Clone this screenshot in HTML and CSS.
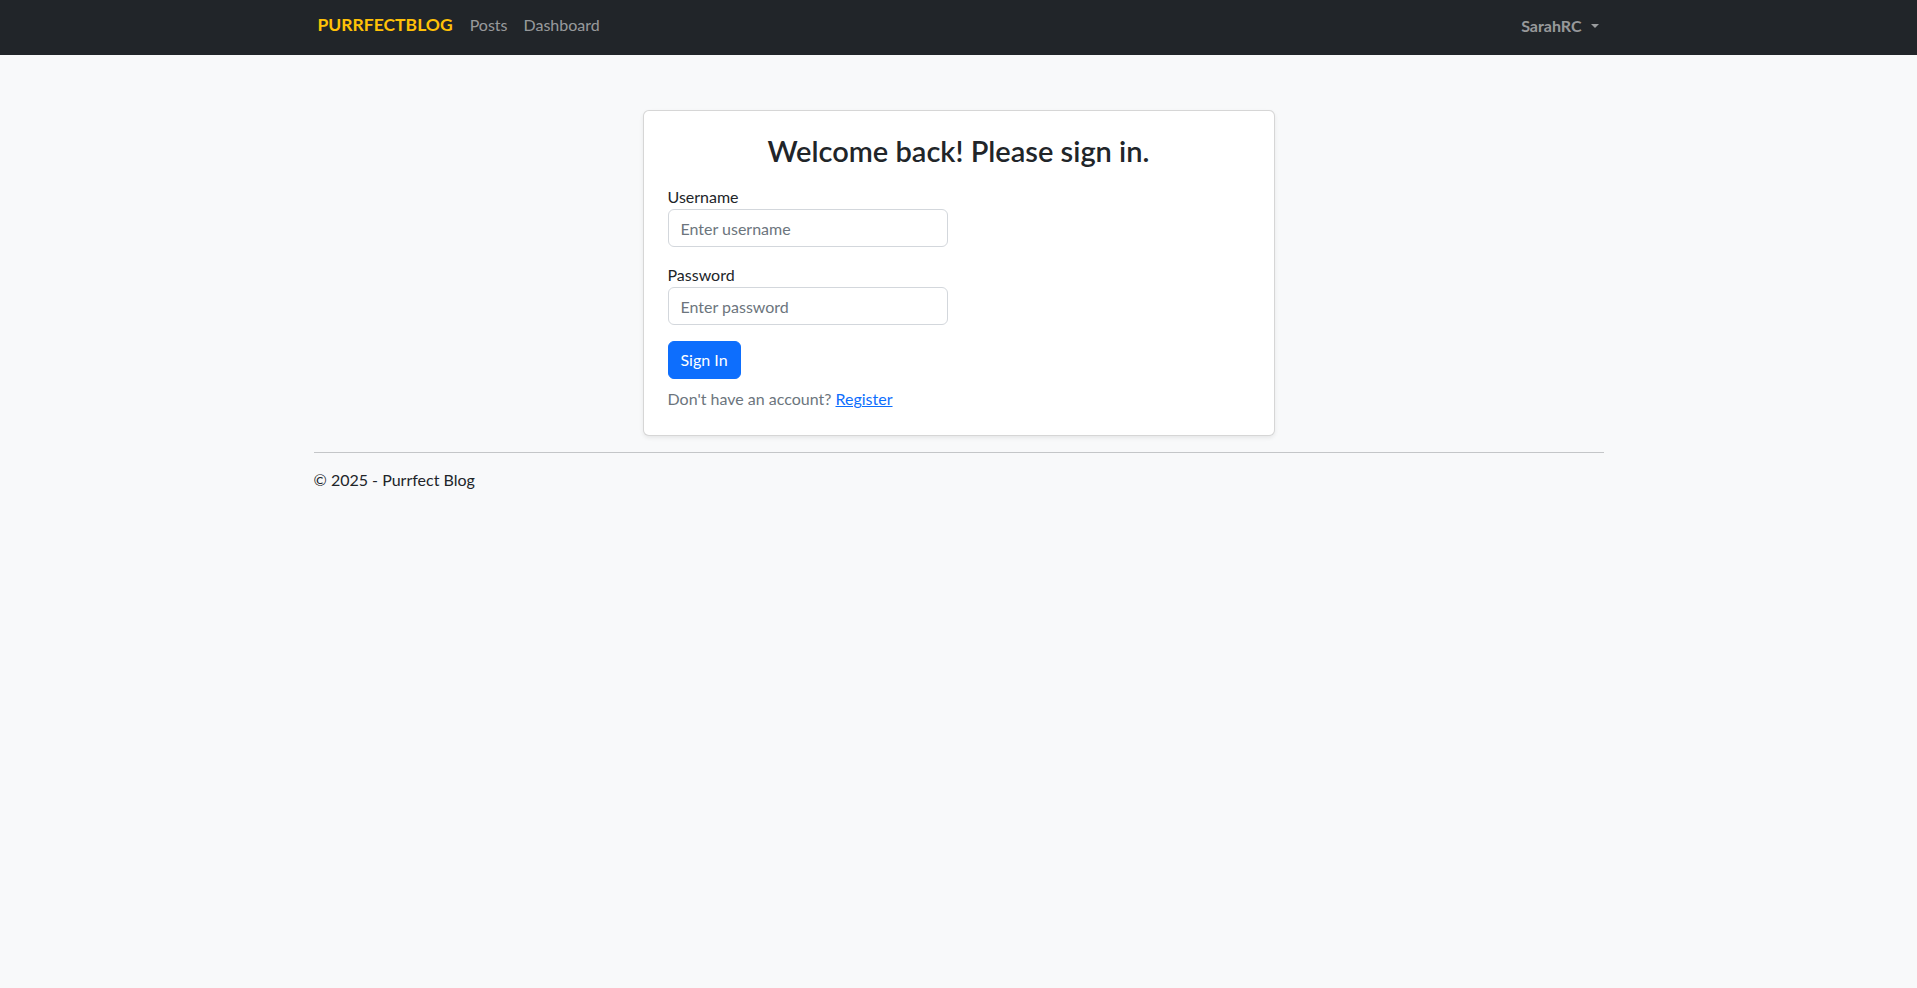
FILE: index.html
```
<!DOCTYPE html>
<html lang="en">
<head>
<meta charset="utf-8">
<title>Sign in - Purrfect Blog</title>
<link rel="stylesheet" href="styles.css">
</head>
<body>
<nav class="navbar">
  <div class="nav-inner">
    <div class="nav-left">
      <a class="brand" href="#">PURRFECTBLOG</a>
      <a class="nav-link" href="#">Posts</a>
      <a class="nav-link" href="#">Dashboard</a>
    </div>
    <a class="user-toggle" href="#">SarahRC<span class="caret"></span></a>
  </div>
</nav>
<main class="page">
  <div class="card">
    <h3 class="card-title">Welcome back! Please sign in.</h3>
    <form class="form">
      <div class="field">
        <label class="form-label" for="username">Username</label>
        <input class="form-control" id="username" type="text" placeholder="Enter username">
      </div>
      <div class="field">
        <label class="form-label" for="password">Password</label>
        <input class="form-control" id="password" type="password" placeholder="Enter password">
      </div>
      <button class="btn-primary" type="button">Sign In</button>
    </form>
    <p class="register">Don't have an account? <a href="#">Register</a></p>
  </div>
  <footer class="footer">
    <hr class="divider">
    <p class="copyright">© 2025 - Purrfect Blog</p>
  </footer>
</main>
</body>
</html>
```
FILE: styles.css
```
* { box-sizing: border-box; }
html, body { margin: 0; padding: 0; }
body {
  background: #f8f9fa;
  color: #212529;
  font-family: "Lato", "Open Sans", sans-serif;
  font-size: 16px;
  line-height: 24px;
}
.navbar {
  background: #212529;
  height: 55px;
}
.nav-inner {
  width: 1290px;
  margin: 0 auto;
  height: 100%;
  display: flex;
  align-items: center;
  justify-content: space-between;
  padding: 0 5px 0 4px;
}
.nav-left { display: flex; align-items: center; }
.brand {
  color: #ffc107;
  font-weight: 700;
  font-size: 17.5px;
  text-decoration: none;
  margin-right: 17px;
  margin-top: -6px;
}
.nav-link {
  color: rgba(255,255,255,.55);
  text-decoration: none;
  margin-right: 16px;
  margin-top: -6px;
}
.user-toggle {
  color: rgba(255,255,255,.55);
  font-weight: 700;
  font-size: 16px;
  text-decoration: none;
  display: flex;
  align-items: center;
  margin-top: -4px;
}
.caret {
  display: inline-block;
  margin-left: 9px;
  border-top: 4px solid rgba(255,255,255,.55);
  border-left: 4px solid transparent;
  border-right: 4px solid transparent;
}
.page {
  width: 1290px;
  margin: 0 auto;
  padding-top: 55px;
}
.card {
  width: 632px;
  margin: 0 auto;
  background: #fff;
  border: 1px solid rgba(0,0,0,.16);
  border-radius: 6px;
  box-shadow: 0 .125rem .25rem rgba(0,0,0,.075);
  padding: 22px 24px 24px;
}
.card-title {
  margin: 0 0 17px;
  text-align: center;
  font-size: 29px;
  font-weight: 600;
  line-height: 35px;
}
.form { display: flex; flex-direction: column; align-items: flex-start; }
.field { display: flex; flex-direction: column; margin-bottom: 16px; }
.form-label { font-size: 16px; line-height: 24px; }
.form-control {
  width: 280px;
  height: 38px;
  border: 1px solid #d3d7dc;
  border-radius: 6px;
  padding: 6px 12px;
  font: inherit;
  font-size: 16px;
  color: #212529;
  background: #fff;
}
.form-control::placeholder { color: #6c757d; }
.btn-primary {
  height: 38px;
  padding: 0 12px;
  background: #0d6efd;
  color: #fff;
  border: 1px solid #0d6efd;
  border-radius: 6px;
  font: inherit;
  font-size: 16px;
}
.register {
  margin: 8px 0 0;
  color: #6c757d;
  font-size: 16px;
}
.register a { color: #0d6efd; }
.footer { margin-top: 16px; }
.divider {
  margin: 0;
  border: 0;
  border-top: 1px solid #c4c6c8;
}
.copyright { margin: 15px 0 0; font-size: 16px; }
```
